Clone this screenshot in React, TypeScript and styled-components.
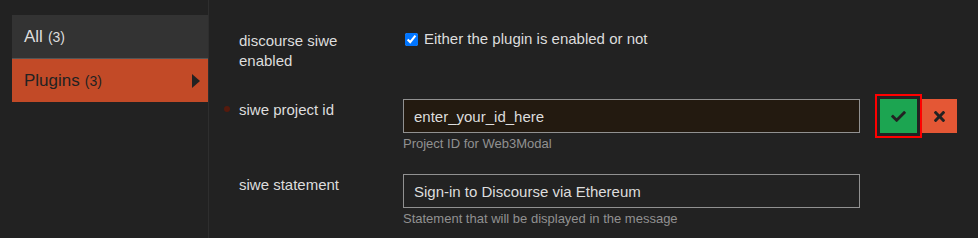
import React from "react"
import styled, { createGlobalStyle } from "styled-components";

const GlobalStyle = createGlobalStyle`
    html, body {
        margin: 0;
        padding: 0;
        background: #222;
    }
    body {
        font-family: "Liberation Sans", Arial, sans-serif;
        color: #ddd;
    }
`;

const Page = styled.div`
    display: flex;
    min-height: 238px;
    background: #222;
`;

const Sidebar = styled.nav`
    width: 196px;
    padding: 15px 0 0 12px;
    border-right: 1px solid #2e2e2e;
    flex-shrink: 0;
`;

const NavItem = styled.div<{ $active?: boolean }>`
    display: flex;
    align-items: center;
    justify-content: space-between;
    height: 43px;
    padding: 0 8px 0 12px;
    font-size: 17px;
    background: ${({ $active }) => $active ? "#c24a27" : "#333"};
    color: ${({ $active }) => $active ? "#222" : "#ddd"};
    border-bottom: ${({ $active }) => $active ? "none" : "1px solid #555"};
`;

const Count = styled.span`
    font-size: 14px;
    margin-left: 5px;
`;

const Arrow = styled.span`
    width: 0;
    height: 0;
    border-top: 7px solid transparent;
    border-bottom: 7px solid transparent;
    border-left: 8px solid #222;
`;

const Content = styled.main`
    padding: 30px 0 0 30px;
`;

const Row = styled.div<{ $space: number }>`
    display: flex;
    align-items: flex-start;
    margin-bottom: ${({ $space }) => $space}px;
`;

const Label = styled.div`
    position: relative;
    width: 164px;
    padding-top: 1px;
    font-size: 15px;
    line-height: 20px;
    color: #ddd;
`;

const Overridden = styled.span`
    position: absolute;
    left: -15px;
    top: 7px;
    width: 6px;
    height: 6px;
    border-radius: 50%;
    background: #561a0d;
`;

const Control = styled.div`
    width: 457px;
`;

const CheckLabel = styled.label`
    display: flex;
    align-items: center;
    gap: 6px;
    margin-top: -1px;
    font-size: 15px;
    line-height: 20px;
    color: #ddd;

    input {
        width: 13px;
        height: 13px;
        margin: 0 0 0 2px;
        accent-color: #0075ff;
    }
`;

const TextInput = styled.input<{ $dirty?: boolean }>`
    box-sizing: border-box;
    width: 457px;
    height: 34px;
    margin: 0;
    padding: 0 10px;
    border: 1px solid #919191;
    border-radius: 0;
    background: ${({ $dirty }) => $dirty ? "#231a10" : "#222"};
    color: #ddd;
    font-family: "Liberation Sans", Arial, sans-serif;
    font-size: 15px;
    outline: none;
`;

const Help = styled.div`
    margin-top: 2px;
    font-size: 13px;
    line-height: 18px;
    color: #919191;
`;

const Actions = styled.div`
    display: flex;
    margin-left: 20px;
`;

const ActionButton = styled.button<{ $kind: "ok" | "cancel" }>`
    display: flex;
    align-items: center;
    justify-content: center;
    width: ${({ $kind }) => $kind === "ok" ? 37 : 35}px;
    height: 34px;
    margin: 0 ${({ $kind }) => $kind === "ok" ? 5 : 0}px 0 0;
    padding: 0;
    border: none;
    border-radius: 0;
    background: ${({ $kind }) => $kind === "ok" ? "#1ca551" : "#e45735"};
    outline: ${({ $kind }) => $kind === "ok" ? "2px solid #f00" : "none"};
    outline-offset: 3px;
    color: #222;
`;

const CheckIcon = () => (
    <svg width="15" height="11" viewBox="0 66 512 380" fill="currentColor">
        <path d="M173.898 439.404l-166.4-166.4c-9.997-9.997-9.997-26.206 0-36.204l36.203-36.204c9.997-9.998 26.207-9.998 36.204 0L192 312.69 432.095 72.596c9.997-9.997 26.207-9.997 36.204 0l36.203 36.204c9.997 9.997 9.997 26.206 0 36.204l-294.4 294.401c-9.998 9.997-26.207 9.997-36.204-.001z"/>
    </svg>
)

const TimesIcon = () => (
    <svg width="11" height="11" viewBox="0 80 352 352" fill="currentColor">
        <path d="M242.72 256l100.07-100.07c12.28-12.28 12.28-32.19 0-44.48l-22.24-22.24c-12.28-12.28-32.19-12.28-44.48 0L176 189.28 75.93 89.21c-12.28-12.28-32.19-12.28-44.48 0L9.21 111.45c-12.28 12.28-12.28 32.19 0 44.48L109.28 256 9.21 356.07c-12.28 12.28-12.28 32.19 0 44.48l22.24 22.24c12.28 12.28 32.2 12.28 44.48 0L176 322.72l100.07 100.07c12.28 12.28 32.2 12.28 44.48 0l22.24-22.24c12.28-12.28 12.28-32.19 0-44.48L242.72 256z"/>
    </svg>
)

export default function App() {
    return (
        <>
            <GlobalStyle />
            <Page>
                <Sidebar>
                    <NavItem>
                        <span>All<Count>(3)</Count></span>
                    </NavItem>
                    <NavItem $active>
                        <span>Plugins<Count>(3)</Count></span>
                        <Arrow />
                    </NavItem>
                </Sidebar>
                <Content>
                    <Row $space={28}>
                        <Label>discourse siwe<br />enabled</Label>
                        <Control>
                            <CheckLabel>
                                <input type="checkbox" defaultChecked />
                                Either the plugin is enabled or not
                            </CheckLabel>
                        </Control>
                    </Row>
                    <Row $space={21}>
                        <Label>
                            <Overridden />
                            siwe project id
                        </Label>
                        <Control>
                            <TextInput $dirty defaultValue="enter_your_id_here" />
                            <Help>Project ID for Web3Modal</Help>
                        </Control>
                        <Actions>
                            <ActionButton $kind="ok"><CheckIcon /></ActionButton>
                            <ActionButton $kind="cancel"><TimesIcon /></ActionButton>
                        </Actions>
                    </Row>
                    <Row $space={0}>
                        <Label>siwe statement</Label>
                        <Control>
                            <TextInput defaultValue="Sign-in to Discourse via Ethereum" />
                            <Help>Statement that will be displayed in the message</Help>
                        </Control>
                    </Row>
                </Content>
            </Page>
        </>
    )
}
